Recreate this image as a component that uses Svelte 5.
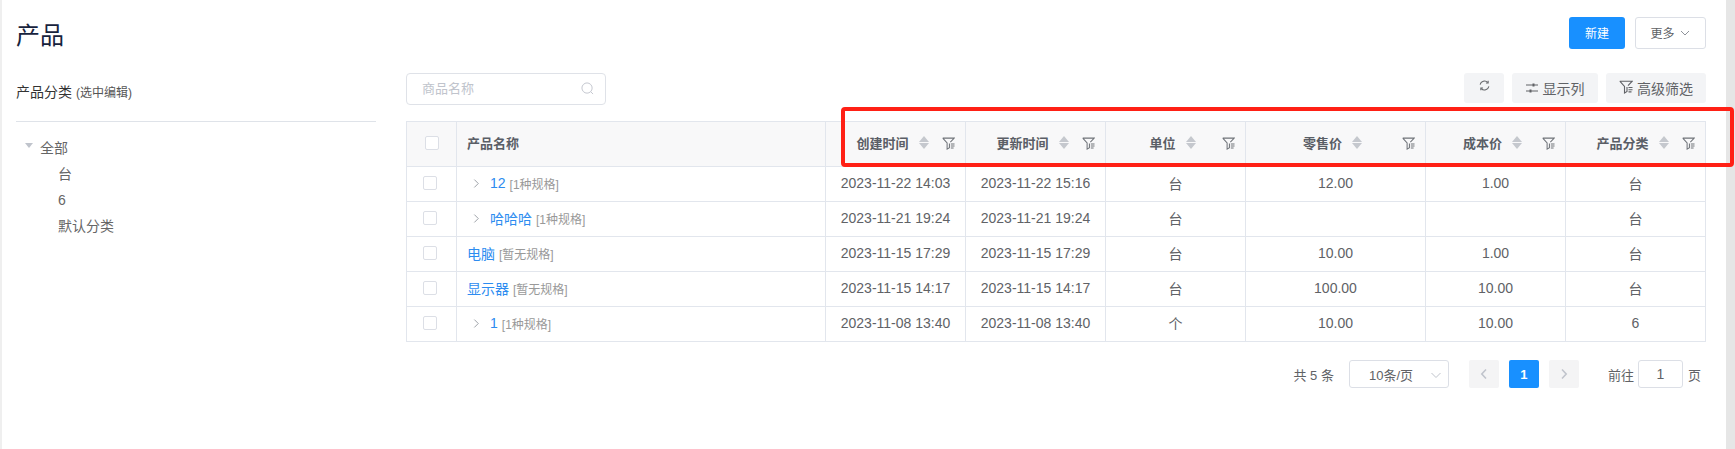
<script>
  const cols = [
    { t: '创建时间', w: 140 }, { t: '更新时间', w: 140 }, { t: '单位', w: 140 },
    { t: '零售价', w: 180 }, { t: '成本价', w: 140 }, { t: '产品分类', w: 140 }
  ];
  const rows = [
    { name: '12', spec: '[1种规格]', exp: true, c: '2023-11-22 14:03', u: '2023-11-22 15:16', unit: '台', price: '12.00', cost: '1.00', cat: '台' },
    { name: '哈哈哈', spec: '[1种规格]', exp: true, c: '2023-11-21 19:24', u: '2023-11-21 19:24', unit: '台', price: '', cost: '', cat: '台' },
    { name: '电脑', spec: '[暂无规格]', exp: false, c: '2023-11-15 17:29', u: '2023-11-15 17:29', unit: '台', price: '10.00', cost: '1.00', cat: '台' },
    { name: '显示器', spec: '[暂无规格]', exp: false, c: '2023-11-15 14:17', u: '2023-11-15 14:17', unit: '台', price: '100.00', cost: '10.00', cat: '台' },
    { name: '1', spec: '[1种规格]', exp: true, c: '2023-11-08 13:40', u: '2023-11-08 13:40', unit: '个', price: '10.00', cost: '10.00', cat: '6' }
  ];
</script>

{#snippet funnel(cls)}
  <svg class={cls} viewBox="0 0 14 14" fill="none" stroke="currentColor" stroke-width="1.1">
    <path d="M0.8 1.2h12.4L9 5.600M0.8 1.200l4.700 5.300v6.500l2.500-1.500V7" />
    <path d="M9.500 7.500h4M9.500 9.700h4M9.500 11.900h3" />
  </svg>
{/snippet}

<div class="page">
  <div class="content">
    <header class="top">
      <h1>产品</h1>
      <div class="top-actions">
        <button class="primary">新建</button>
        <button class="more">更多
          <svg viewBox="0 0 12 12" class="chev"><path d="M2 4l4 4 4-4" fill="none" stroke="currentColor" /></svg>
        </button>
      </div>
    </header>
    <div class="body">
      <aside class="side">
        <div class="side-title">产品分类 <small>(选中编辑)</small></div>
        <ul class="tree">
          <li class="root"><i class="tri"></i>全部</li>
          <li>台</li>
          <li>6</li>
          <li>默认分类</li>
        </ul>
      </aside>
      <section class="main">
        <div class="toolbar">
          <div class="search">
            <span>商品名称</span>
            <svg viewBox="0 0 14 14" class="mag" fill="none" stroke="currentColor" stroke-width="1"><circle cx="6.5" cy="6.5" r="5.500" /><path d="M10.500 10.500l2.500 2.500" /></svg>
          </div>
          <div class="tools">
            <button class="tool icon-only">
              <svg viewBox="0 0 12 12" class="refresh" fill="none" stroke="currentColor" stroke-width="1.1"><path d="M1.2 5A5 5 0 0 1 9.6 2.6M10.8 7A5 5 0 0 1 2.4 9.4" /><path d="M10 0.8v2.4H7.6M2 11.2V8.8h2.4" /></svg>
            </button>
            <button class="tool">
              <svg viewBox="0 0 12 12" class="sliders" fill="none" stroke="currentColor"><path d="M0 3h12M0 9h12" /><path d="M7.5 1.5v3M4.5 7.5v3" stroke-width="2" /></svg>
              显示列
            </button>
            <button class="tool filter-tool">
              {@render funnel('fun-tool')}
              高级筛选
            </button>
          </div>
        </div>
        <table>
          <colgroup>
            <col style="width:50px" /><col style="width:369px" />
            {#each cols as c}<col style="width:{c.w}px" />{/each}
          </colgroup>
          <thead>
            <tr>
              <th><span class="check head-check"></span></th>
              <th class="left">产品名称</th>
              {#each cols as c}
                <th class="sortable">
                  <div class="th-in">
                    <span>{c.t}</span>
                    <span class="sort"><i class="up"></i><i class="down"></i></span>
                  </div>
                  {@render funnel('fun-th')}
                </th>
              {/each}
            </tr>
          </thead>
          <tbody>
            {#each rows as r}
              <tr>
                <td><span class="check"></span></td>
                <td class="left">
                  <div class="name" class:exp={r.exp}>
                    {#if r.exp}
                      <svg viewBox="0 0 8 12" class="arrow"><path d="M1.5 1.5L6 6l-4.500 4.500" fill="none" stroke="currentColor" /></svg>
                    {/if}
                    <a href="#top">{r.name}</a>
                    <span class="spec">{r.spec}</span>
                  </div>
                </td>
                <td>{r.c}</td><td>{r.u}</td><td>{r.unit}</td><td>{r.price}</td><td>{r.cost}</td><td>{r.cat}</td>
              </tr>
            {/each}
          </tbody>
        </table>
        <nav class="pager">
          <span class="total">共 5 条</span>
          <div class="size">10条/页
            <svg viewBox="0 0 12 12" class="chev size-chev"><path d="M1.500 4l4.500 4.500L10.500 4" fill="none" stroke="currentColor" /></svg>
          </div>
          <span class="pg off"><svg viewBox="0 0 8 12"><path d="M6 1.500L1.800 6 6 10.500" fill="none" stroke="currentColor" stroke-width="1.600" /></svg></span>
          <span class="pg on">1</span>
          <span class="pg off"><svg viewBox="0 0 8 12"><path d="M2 1.500L6.200 6 2 10.500" fill="none" stroke="currentColor" stroke-width="1.600" /></svg></span>
          <span class="goto">前往</span>
          <span class="jump">1</span>
          <span class="ye">页</span>
        </nav>
      </section>
    </div>
  </div>
  <div class="scrollbar"></div>
  <div class="mark"></div>
</div>

<style>
  :global(body) {
    margin: 0;
    background: #fff;
    overflow: hidden;
  }
  .page {
    position: relative;
    display: flex;
    width: 1735px;
    height: 449px;
    overflow: hidden;
    font-family: "Liberation Sans", "Noto Sans CJK SC", sans-serif;
    font-size: 14px;
    color: #606266;
    border-left: 2px solid #efefef;
    box-sizing: border-box;
  }
  .content {
    flex: 1;
    min-width: 0;
    padding: 17px 20px 0 14px;
  }
  .scrollbar {
    width: 9px;
    background: #e6e6e6;
  }
  .mark {
    position: absolute;
    left: 839px;
    top: 107px;
    width: 893px;
    height: 60px;
    box-sizing: border-box;
    border: 4px solid #ff2015;
    border-radius: 4px;
    pointer-events: none;
  }
  .top {
    display: flex;
    justify-content: space-between;
    align-items: center;
    height: 32px;
    margin-bottom: 24px;
  }
  h1 {
    margin: 6px 0 0;
    font-size: 24px;
    font-weight: 400;
    line-height: 32px;
    color: #17233d;
  }
  button {
    font: inherit;
    cursor: pointer;
    box-sizing: border-box;
  }
  .top-actions {
    display: flex;
    gap: 10px;
  }
  .primary {
    width: 56px;
    height: 32px;
    border: 0;
    border-radius: 3px;
    background: #1890ff;
    color: #fff;
    font-size: 12px;
    padding: 0 0 1px;
  }
  .more {
    width: 71px;
    height: 32px;
    border: 1px solid #dcdfe6;
    border-radius: 3px;
    background: #fff;
    color: #606266;
    font-size: 12px;
    display: flex;
    align-items: center;
    justify-content: center;
    gap: 4px;
    padding: 0 0 1px;
  }
  .chev {
    width: 12px;
    height: 12px;
    color: #8f939a;
  }
  .body {
    display: flex;
    gap: 30px;
  }
  .side {
    width: 360px;
    flex: none;
  }
  .side-title {
    height: 38px;
    line-height: 38px;
    padding-bottom: 10px;
    border-bottom: 1px solid #dfe3e9;
    font-size: 14px;
    color: #333;
  }
  .side-title small {
    font-size: 12px;
    color: #555;
  }
  .tree {
    list-style: none;
    margin: 0;
    padding: 13px 0 0 42px;
    color: #666;
  }
  .tree li {
    height: 26px;
    line-height: 26px;
  }
  .tree .root {
    position: relative;
    margin-left: -18px;
  }
  .tri {
    position: absolute;
    left: -15px;
    top: 8px;
    border: 4px solid transparent;
    border-top: 5px solid #c0c4cc;
    border-bottom: 0;
  }
  .main {
    width: 1300px;
    flex: none;
  }
  .toolbar {
    display: flex;
    justify-content: space-between;
    height: 32px;
    margin-bottom: 16px;
  }
  .search {
    width: 200px;
    height: 32px;
    box-sizing: border-box;
    border: 1px solid #dfe2e8;
    border-radius: 4px;
    display: flex;
    align-items: center;
    justify-content: space-between;
    padding: 0 11px 3px 15px;
    font-size: 13px;
    color: #c0c4cc;
  }
  .mag {
    width: 13px;
    height: 13px;
    margin-top: 2px;
  }
  .tools {
    display: flex;
    gap: 8px;
    height: 30px;
  }
  .tool {
    height: 30px;
    border: 0;
    border-radius: 3px;
    background: #f3f4f6;
    color: #606266;
    display: flex;
    align-items: center;
    justify-content: center;
    gap: 5px;
    padding: 0;
    width: 86px;
    font-size: 14px;
  }
  .filter-tool {
    width: 100px;
    gap: 4px;
  }
  .icon-only {
    width: 40px;
    padding: 0 0 6px;
  }
  .refresh {
    width: 11px;
    height: 11px;
  }
  .sliders {
    width: 12px;
    height: 12px;
  }
  .fun-tool {
    width: 14px;
    height: 14px;
    margin-top: -2px;
  }
  table {
    border-collapse: collapse;
    table-layout: fixed;
    width: 1299px;
  }
  th, td {
    border: 1px solid #e2e6ed;
    padding: 0 0 2px;
    text-align: center;
    box-sizing: border-box;
  }
  th {
    height: 45px;
    background: #f8f8f9;
    font-size: 13px;
    font-weight: 700;
    color: #5a5e66;
    position: relative;
    padding-bottom: 3px;
  }
  td {
    height: 35px;
    color: #606266;
  }
  .left {
    text-align: left;
    padding-left: 10px;
  }
  .check {
    display: block;
    width: 14px;
    height: 14px;
    box-sizing: border-box;
    border: 1px solid #dcdfe6;
    border-radius: 2px;
    background: #fff;
    margin: 0 0 0 16px;
  }
  .head-check {
    margin-left: 18px;
  }
  .th-in {
    display: flex;
    justify-content: center;
    align-items: center;
  }
  .sort {
    display: flex;
    flex-direction: column;
    gap: 1px;
    margin: 0 6px 0 10px;
  }
  .sort i {
    display: block;
    border-style: solid;
    border-color: transparent;
    border-width: 6px 5px;
  }
  .up {
    border-top: 0 !important;
    border-bottom-color: #c5c8ce !important;
  }
  .down {
    border-bottom: 0 !important;
    border-top-color: #c5c8ce !important;
  }
  .fun-th {
    position: absolute;
    right: 10px;
    top: 15px;
    width: 13px;
    height: 13px;
    color: #6e7278;
  }
  .name {
    display: flex;
    align-items: center;
  }
  .name.exp {
    padding-left: 6px;
  }
  .arrow {
    width: 7px;
    height: 11px;
    color: #8f939a;
    margin-right: 10px;
  }
  a {
    color: #2d8cf0;
    text-decoration: none;
  }
  .spec {
    font-size: 12px;
    color: #999;
    margin-left: 4px;
  }
  .pager {
    display: flex;
    align-items: center;
    margin-top: 18px;
    height: 28px;
    font-size: 13px;
    justify-content: flex-end;
    padding-right: 5px;
  }
  .size {
    width: 100px;
    height: 28px;
    box-sizing: border-box;
    border: 1px solid #dcdfe6;
    border-radius: 3px;
    margin: 0 20px 0 15px;
    display: flex;
    align-items: center;
    padding-left: 19px;
    position: relative;
  }
  .size-chev {
    position: absolute;
    right: 6px;
    top: 8px;
    color: #c0c4cc;
  }
  .pg {
    width: 30px;
    height: 28px;
    border-radius: 2px;
    margin-right: 10px;
    display: flex;
    align-items: center;
    justify-content: center;
    box-sizing: border-box;
    background: #f4f4f5;
    color: #c0c4cc;
  }
  .pg svg {
    width: 8px;
    height: 12px;
  }
  .pg.on {
    background: #1890ff;
    color: #fff;
    font-weight: 700;
  }
  .goto {
    margin-left: 19px;
  }
  .jump {
    width: 45px;
    height: 28px;
    box-sizing: border-box;
    border: 1px solid #dcdfe6;
    border-radius: 3px;
    margin: 0 5px 0 4px;
    display: flex;
    align-items: center;
    justify-content: center;
    font-size: 14px;
  }
</style>
